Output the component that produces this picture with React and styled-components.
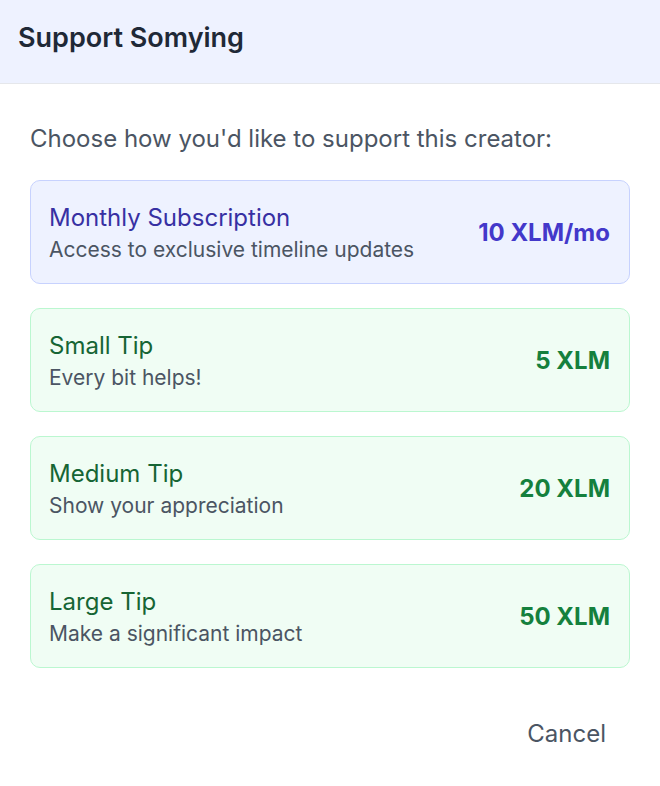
import React from "react";
import styled, { createGlobalStyle } from "styled-components";

const Global = createGlobalStyle`
  html, body { margin: 0; padding: 0; background: #ffffff; }
  body { font-family: Inter, "Noto Sans", sans-serif; -webkit-font-smoothing: antialiased; }
  * { box-sizing: border-box; }
`;

const Dialog = styled.div`
  width: 660px;
  min-height: 786px;
  background: #ffffff;
  display: flex;
  flex-direction: column;
`;

const Header = styled.header`
  height: 84px;
  background: #eef2ff;
  border-bottom: 1px solid #e5e7eb;
  display: flex;
  align-items: center;
  padding: 0 18px 8px;
`;

const Title = styled.h2`
  margin: 0;
  font-size: 27px;
  font-weight: 600;
  color: #1f2937;
  line-height: 1;
`;

const Body = styled.div`
  padding: 40px 30px 0;
  display: flex;
  flex-direction: column;
`;

const Intro = styled.p`
  margin: 0 0 26px;
  font-size: 24px;
  color: #4b5563;
  line-height: 30px;
`;

const List = styled.div`
  display: flex;
  flex-direction: column;
  gap: 24px;
`;

const Option = styled.button`
  all: unset;
  box-sizing: border-box;
  height: 104px;
  border-radius: 10px;
  border: 1px solid ${(p) => (p.$tone === "indigo" ? "#c7d2fe" : "#bbf7d0")};
  background: ${(p) => (p.$tone === "indigo" ? "#eef2ff" : "#f0fdf4")};
  display: flex;
  align-items: center;
  justify-content: space-between;
  padding: 0 19px 0 18px;
  cursor: pointer;
`;

const Texts = styled.div`
  display: flex;
  flex-direction: column;
  gap: 2px;
  padding-top: 4px;
`;

const Name = styled.div`
  font-size: 24px;
  line-height: 30px;
  font-weight: 400;
  color: ${(p) => (p.$tone === "indigo" ? "#3730a3" : "#166534")};
`;

const Desc = styled.div`
  font-size: 21px;
  line-height: 30px;
  color: #4b5563;
`;

const Price = styled.div`
  font-size: 24px;
  font-weight: 700;
  color: ${(p) => (p.$tone === "indigo" ? "#4338ca" : "#15803d")};
`;

const Footer = styled.div`
  display: flex;
  justify-content: flex-end;
  padding: 43px 30px 0;
`;

const Cancel = styled.button`
  all: unset;
  font-family: Inter, "Noto Sans", sans-serif;
  font-size: 24px;
  color: #4b5563;
  padding: 8px 24px;
  cursor: pointer;
`;

const options = [
  { tone: "indigo", name: "Monthly Subscription", desc: "Access to exclusive timeline updates", price: "10 XLM/mo" },
  { tone: "green", name: "Small Tip", desc: "Every bit helps!", price: "5 XLM" },
  { tone: "green", name: "Medium Tip", desc: "Show your appreciation", price: "20 XLM" },
  { tone: "green", name: "Large Tip", desc: "Make a significant impact", price: "50 XLM" },
];

export default function App() {
  return (
    <>
      <Global />
      <Dialog>
        <Header>
          <Title>Support Somying</Title>
        </Header>
        <Body>
          <Intro>Choose how you'd like to support this creator:</Intro>
          <List>
            {options.map((o) => (
              <Option key={o.name} $tone={o.tone}>
                <Texts>
                  <Name $tone={o.tone}>{o.name}</Name>
                  <Desc>{o.desc}</Desc>
                </Texts>
                <Price $tone={o.tone}>{o.price}</Price>
              </Option>
            ))}
          </List>
        </Body>
        <Footer>
          <Cancel>Cancel</Cancel>
        </Footer>
      </Dialog>
    </>
  );
}
